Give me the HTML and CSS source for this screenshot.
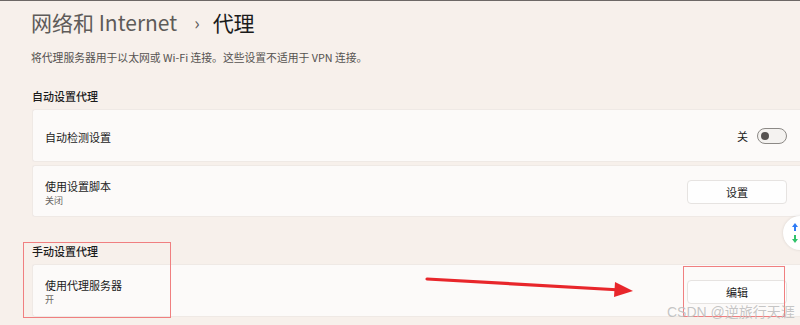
FILE: index.html
```html
<!DOCTYPE html>
<html lang="zh-CN">
<head>
<meta charset="utf-8">
<title>代理</title>
<link rel="stylesheet" href="styles.css">
</head>
<body>
<div class="page">
  <h1 class="title"><span class="crumb">网络和 Internet</span><span class="chev">›</span><span class="current">代理</span></h1>
  <p class="desc">将代理服务器用于以太网或 Wi-Fi 连接。这些设置不适用于 VPN 连接。</p>

  <h2 class="section">自动设置代理</h2>
  <div class="cards">
    <div class="card">
      <div class="label"><div class="name">自动检测设置</div></div>
      <div class="control">
        <span class="state">关</span>
        <span class="toggle"><span class="knob"></span></span>
      </div>
    </div>
    <div class="card">
      <div class="label"><div class="name">使用设置脚本</div><div class="sub">关闭</div></div>
      <div class="control"><button class="btn">设置</button></div>
    </div>
  </div>

  <h2 class="section second">手动设置代理</h2>
  <div class="cards">
    <div class="card">
      <div class="label"><div class="name">使用代理服务器</div><div class="sub">开</div></div>
      <div class="control"><button class="btn">编辑</button></div>
    </div>
  </div>
</div>

<div class="fab">
  <svg width="10" height="24" viewBox="0 0 10 24">
    <path d="M5 2 L8 6 H6 V10 H4 V6 H2 Z" fill="#2f7cf6"/>
    <path d="M5 22 L8 18 H6 V14 H4 V18 H2 Z" fill="#2fc26a"/>
  </svg>
</div>

<div class="mark mark-left"></div>
<div class="mark mark-right"></div>
<svg class="arrow" width="220" height="30" viewBox="0 0 220 30">
  <path d="M2 4 L196 15" stroke="#e8262b" stroke-width="3.2" stroke-linecap="round" fill="none"/>
  <path d="M190 7 L208 16 L189 22 Z" fill="#e8262b"/>
</svg>
<div class="watermark">CSDN @逆旅行天涯</div>
</body>
</html>
```

FILE: styles.css
```css
* { box-sizing: border-box; }
html, body { margin: 0; padding: 0; }
body {
  width: 800px;
  height: 325px;
  overflow: hidden;
  background: #f7f0eb;
  border-top: 1.5px solid #6d6866;
  font-family: "Noto Sans CJK SC", "Noto Sans", sans-serif;
  color: #1b1b1b;
  position: relative;
}
.page {
  padding: 7px 0 0 31px;
}
.title {
  margin: 0;
  font-size: 21px;
  line-height: 28px;
  font-weight: 400;
  display: flex;
  align-items: center;
}
.crumb { color: #5e5b59; }
.chev {
  color: #5e5b59;
  font-size: 18px;
  margin: 0 13px 0 17px;
}
.current { color: #1b1b1b; }
.desc {
  margin: 13px 0 0 0;
  font-size: 10.8px;
  line-height: 16px;
  color: #555250;
}
.section {
  margin: 23px 0 5px 1px;
  font-size: 11px;
  line-height: 16px;
  font-weight: 500;
  color: #1b1b1b;
}
.section.second { margin-top: 26px; }
.cards {
  display: flex;
  flex-direction: column;
  gap: 3px;
  margin-left: 1px;
}
.card {
  height: 53px;
  background: #fcfaf9;
  border: 1px solid #efe9e5;
  border-right: none;
  border-radius: 3px 0 0 3px;
  display: flex;
  align-items: center;
  justify-content: space-between;
  padding: 0 13px 0 12px;
}
.card + .card { height: 52px; }
.label { display: flex; flex-direction: column; padding-top: 2px; }
.name {
  font-size: 11px;
  line-height: 16px;
  color: #1b1b1b;
}
.sub {
  font-size: 9px;
  line-height: 13px;
  color: #6a6664;
}
.control {
  display: flex;
  align-items: center;
}
.state {
  font-size: 11px;
  color: #1b1b1b;
  margin-right: 9px;
}
.toggle {
  width: 30px;
  height: 16px;
  border: 1px solid #8c8986;
  border-radius: 8px;
  background: #f4f2f0;
  display: flex;
  align-items: center;
  padding-left: 3px;
}
.knob {
  width: 8px;
  height: 8px;
  border-radius: 50%;
  background: #555250;
}
.btn {
  width: 100px;
  height: 24px;
  background: #fefefe;
  border: 1px solid #e6e3e1;
  border-radius: 4px;
  font-family: "Noto Sans CJK SC", sans-serif;
  font-size: 11px;
  color: #1b1b1b;
  padding: 0;
  margin-top: 2px;
}
.fab {
  position: absolute;
  left: 783px;
  top: 215px;
  width: 34px;
  height: 34px;
  border-radius: 50%;
  background: #ffffff;
  box-shadow: 0 0 3px rgba(0,0,0,0.12);
  display: flex;
  align-items: center;
  padding-left: 7px;
}
.mark {
  position: absolute;
  border: 1px solid #f07f80;
}
.mark-left { left: 23px; top: 241px; width: 148px; height: 76px; }
.mark-right { left: 683px; top: 265px; width: 102px; height: 51px; }
.arrow {
  position: absolute;
  left: 425px;
  top: 274px;
}
.watermark {
  position: absolute;
  left: 667px;
  top: 302px;
  font-family: "Liberation Sans", "Noto Sans CJK SC", sans-serif;
  font-size: 14px;
  line-height: 18px;
  color: rgba(190,190,190,0.9);
  white-space: nowrap;
}
```
